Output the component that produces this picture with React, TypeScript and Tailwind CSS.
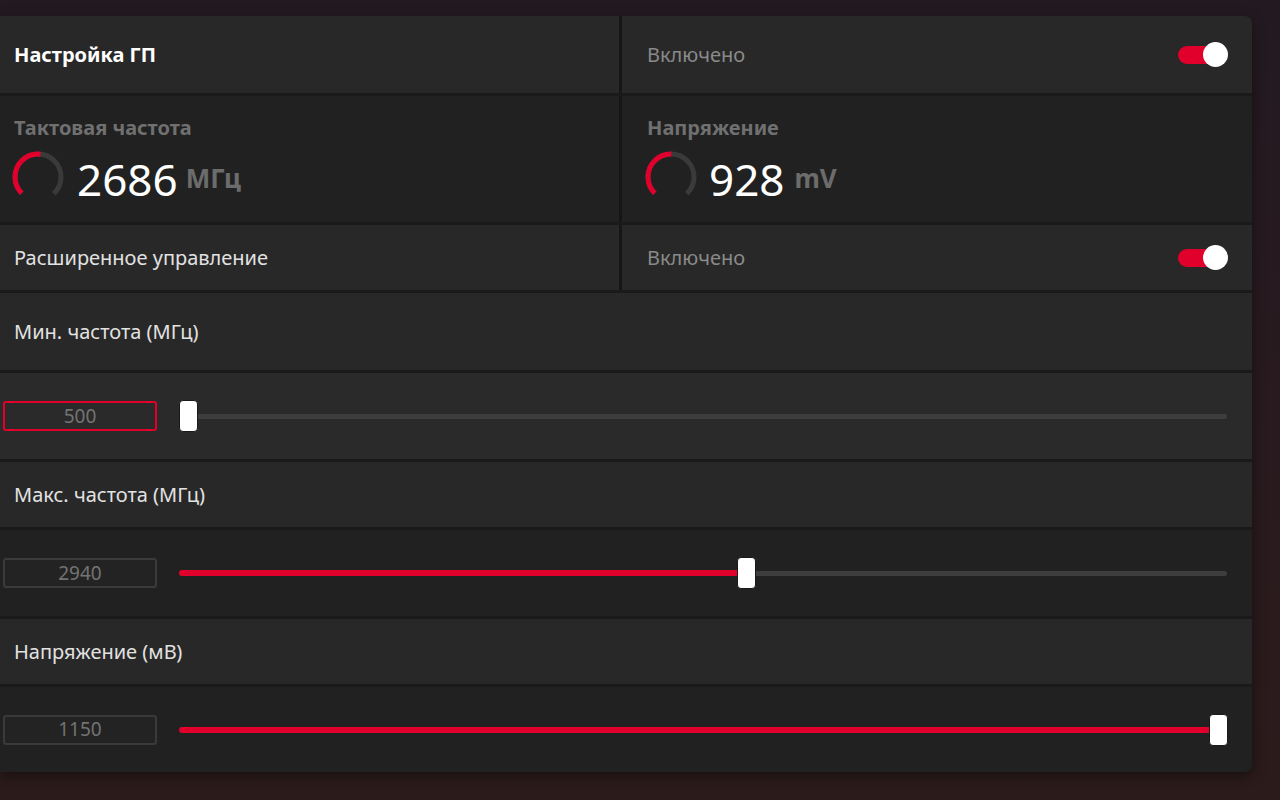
import React from "react";

const FONT = "font-['Noto_Sans','Open_Sans',sans-serif]";

function Toggle() {
  return (
    <div className="relative w-[50px] h-[26px] flex items-center">
      <div className="absolute left-0 w-[44px] h-[18px] rounded-full bg-[#e0002b]" />
      <div className="absolute right-0 w-[25px] h-[25px] rounded-full bg-white" />
    </div>
  );
}

function Gauge({ frac }: { frac: number }) {
  const r = 23;
  const c = 2 * Math.PI * r;
  return (
    <svg width="56" height="56" viewBox="0 0 56 56" className="shrink-0">
      <circle
        cx="28"
        cy="28"
        r={r}
        fill="none"
        stroke="#3a3a3a"
        strokeWidth="5"
        strokeDasharray={`${0.75 * c} ${c}`}
        transform="rotate(135 28 28)"
      />
      <circle
        cx="28"
        cy="28"
        r={r}
        fill="none"
        stroke="#e0002b"
        strokeWidth="5"
        strokeDasharray={`${0.75 * frac * c} ${c}`}
        transform="rotate(135 28 28)"
      />
    </svg>
  );
}

function SliderRow({
  value,
  frac,
  focused,
  bg,
  h,
}: {
  value: string;
  frac: number;
  focused?: boolean;
  bg: string;
  h: string;
}) {
  return (
    <div className={`flex items-center ${bg} ${h} pl-[3px] pr-[25px]`}>
      <div
        className={`w-[154px] h-[30px] flex items-center justify-center rounded-[3px] border-2 text-[19px] text-[#737373] ${
          focused ? "border-[#e0002b] bg-[#2a2a2a]" : "border-[#3a3a3a] bg-[#232323]"
        }`}
      >
        {value}
      </div>
      <div className="relative flex-1 ml-[22px] h-[32px] flex items-center">
        <div className="w-full h-[5px] rounded-full bg-[#3e3e3e]" />
        <div className="absolute left-[9px] right-[9px] top-0 bottom-0">
          <div
            className="absolute left-[-9px] top-[13px] h-[6px] rounded-l-full bg-[#e0002b]"
            style={{ width: `calc(${frac * 100}% + 9px)`, display: frac > 0 ? "block" : "none" }}
          />
          <div
            className="absolute top-0 w-[19px] h-[32px] -ml-[9.5px] rounded-[4px] bg-white border border-[#1a1a1a]"
            style={{ left: `${frac * 100}%` }}
          />
        </div>
      </div>
    </div>
  );
}

function LabelRow({ text, h }: { text: string; h: string }) {
  return (
    <div className={`flex items-center ${h} bg-[#282828] pl-[14px] text-[20px] text-[#e2e2e2]`}>
      {text}
    </div>
  );
}

export default function App() {
  return (
    <div
      className={`w-[1280px] h-[800px] bg-[linear-gradient(180deg,#231a21_0%,#281a1f_50%,#2c1b1b_100%)] pt-[16px] ${FONT}`}
    >
      <div className="w-[1252px] flex flex-col gap-[3px] bg-[#1a1a1a] rounded-r-[7px] overflow-hidden shadow-[0_4px_14px_rgba(0,0,0,0.45)]">
        {/* Row 1 */}
        <div className="grid grid-cols-[619px_1fr] gap-[3px] bg-[#161616]">
          <div className="h-[77px] bg-[#282828] flex items-center pl-[14px] text-[20px] font-bold text-white">
            Настройка ГП
          </div>
          <div className="h-[77px] bg-[#282828] flex items-center justify-between pl-[25px] pr-[24px] text-[20px] text-[#8a8a8a]">
            <span>Включено</span>
            <Toggle />
          </div>
        </div>
        {/* Row 2 */}
        <div className="grid grid-cols-[619px_1fr] gap-[3px] bg-[#161616]">
          <div className="h-[126px] bg-[#212121] pl-[14px] pt-[19px] flex flex-col">
            <div className="text-[20px] font-bold text-[#707070] leading-[26px]">Тактовая частота</div>
            <div className="flex items-center mt-[7px] -ml-[4px]">
              <Gauge frac={0.52} />
              <span className="ml-[11px] text-[44px] leading-[58px] text-white translate-y-[2px]">2686</span>
              <span className="ml-[8px] text-[26px] font-bold text-[#6c6c6c] translate-y-[1px]">МГц</span>
            </div>
          </div>
          <div className="h-[126px] bg-[#212121] pl-[25px] pt-[19px] flex flex-col">
            <div className="text-[20px] font-bold text-[#707070] leading-[26px]">Напряжение</div>
            <div className="flex items-center mt-[7px] -ml-[4px]">
              <Gauge frac={0.5} />
              <span className="ml-[10px] text-[44px] leading-[58px] text-white translate-y-[2px]">928</span>
              <span className="ml-[10px] text-[26px] font-bold text-[#6c6c6c] translate-y-[1px]">mV</span>
            </div>
          </div>
        </div>
        {/* Row 3 */}
        <div className="grid grid-cols-[619px_1fr] gap-[3px] bg-[#161616]">
          <div className="h-[65px] bg-[#282828] flex items-center pl-[14px] text-[20px] text-[#e2e2e2]">
            Расширенное управление
          </div>
          <div className="h-[65px] bg-[#282828] flex items-center justify-between pl-[25px] pr-[24px] text-[20px] text-[#8a8a8a]">
            <span>Включено</span>
            <Toggle />
          </div>
        </div>
        <LabelRow text="Мин. частота (МГц)" h="h-[77px]" />
        <SliderRow value="500" frac={0} focused bg="bg-[#2a2a2a]" h="h-[86px]" />
        <LabelRow text="Макс. частота (МГц)" h="h-[65px]" />
        <SliderRow value="2940" frac={0.542} bg="bg-[#212121]" h="h-[86px]" />
        <LabelRow text="Напряжение (мВ)" h="h-[65px]" />
        <SliderRow value="1150" frac={1} bg="bg-[#212121]" h="h-[85px]" />
      </div>
    </div>
  );
}
